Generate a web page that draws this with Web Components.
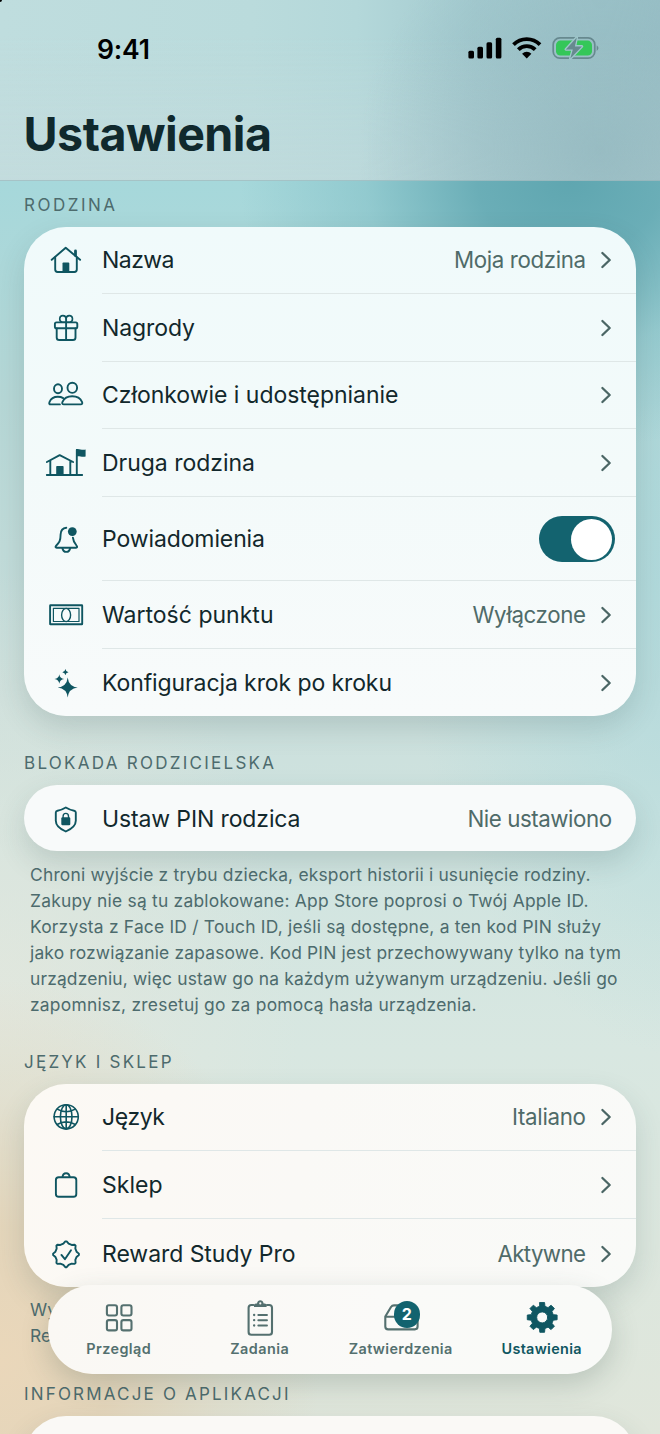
<!DOCTYPE html>
<html lang="pl">
<head>
<meta charset="utf-8">
<title>Ustawienia</title>
<style>
html,body{margin:0;padding:0;height:1434px;overflow:hidden}
body{font-family:Inter,"Liberation Sans",sans-serif;color:#12282c}
</style>
</head>
<body>
<settings-app></settings-app>
<script>
const define = (name, html, setup) => customElements.define(name, class extends HTMLElement {
  constructor(){
    super();
    const t = document.createElement('template');
    t.innerHTML = html;
    this.attachShadow({mode:'open'}).append(t.content.cloneNode(true));
  }
  connectedCallback(){ if (setup) setup(this, this.shadowRoot); }
});

// Closed polygon with points at [radius, degrees] around a centre.
const polar = (cx, cy, pts) => 'M' + pts.map(([r,a]) => {
  const t = a*Math.PI/180;
  return (cx + r*Math.sin(t)).toFixed(2) + ' ' + (cy - r*Math.cos(t)).toFixed(2);
}).join('L') + 'Z';
const repeat = (n, f) => Array.from({length:n}, (_,i) => f(i*360/n)).flat();
const sparkle = (x,y,r) => { const k = r*.1;
  return `M${x} ${y-r}Q${x+k} ${y-k} ${x+r} ${y}Q${x+k} ${y+k} ${x} ${y+r}Q${x-k} ${y+k} ${x-r} ${y}Q${x-k} ${y-k} ${x} ${y-r}Z`; };

const seal = polar(21,17.3, repeat(8, a => [[12.9,a-3],[12.9,a+3],[10.9,a+14],[10.9,a+31]]));
const gear = polar(16,16, repeat(8, a => [[15.1,a-9],[15.1,a+9],[11.4,a+14],[11.4,a+31]]));

const icons = {
  house:'<path d="M6.7 16.8 20.7 4.8 35.1 16.8"/><path d="M10.2 14.3V26.6Q10.2 29 12.6 29H29.4Q31.8 29 31.8 26.6V14.3"/><path d="M30.5 8v4.5" stroke-width="2.8"/><path class="f" d="M17.5 28.8V20.4q0-.9.9-.9h5q.9 0 .9.9v8.4z"/>',
  gift:'<rect x="9.9" y="11.4" width="22.4" height="5.9" rx="1.6"/><path d="M11.7 17.4V26.4Q11.7 29 14.3 29H27.9Q30.5 29 30.5 26.4V17.4M21.1 8V29"/><path d="M21.1 11.2H17.4A3.2 3.3 0 1 1 21.1 7.8A3.2 3.3 0 1 1 24.8 11.2Z" stroke-width="1.6"/>',
  people:'<ellipse cx="27.3" cy="9.8" rx="4.8" ry="5.1"/><ellipse cx="13" cy="10.7" rx="4" ry="4.5"/><path d="M18.9 26.4C17.3 26.4 16.8 25.3 17.5 23.8C19 20.4 22.6 18.3 27.2 18.3S35.5 20.4 37 23.8C37.7 25.3 37.2 26.4 35.6 26.4Z"/><path d="M14.9 26.4H5.8C4.2 26.4 3.9 25.5 4.5 24C5.8 20.8 8.8 18.8 12.8 18.8C14.9 18.8 16.7 19.2 18.2 20.1"/>',
  annex:'<path d="M1.9 16 14.7 9.2 28.1 16M5.3 14.8V28.8M25.3 14.8V28.8M1.8 29H37.2M31.8 4V28.8"/><path class="f" d="M11.2 29V20.8q0-.8.8-.8h5.8q.8 0 .8.8V29zM31 3.3c2.8-1.2 5.4 1.2 9.6.3v7c-4 .9-6.6-1.2-9.6-.1z"/>',
  bell:'<path d="M21.3 5.8C17.7 6.2 15.7 8.9 15.6 12.5C15.5 19.2 14.4 20.5 10.9 24C10.2 24.9 10.5 25.7 11.6 25.7H31.1C32.2 25.7 32.4 24.9 31.8 24C29.3 21.1 28.2 19.7 27.9 15.6"/><path d="M17.4 26C17.8 28.7 19.3 29.9 21.3 29.9S24.8 28.7 25.2 26"/><circle class="f" cx="27.3" cy="9.6" r="4.4"/>',
  note:'<rect x="5.1" y="7.3" width="32.1" height="19" rx=".4" stroke-width="1.9"/><rect x="8.4" y="10.3" width="25.6" height="13.2" stroke-width="1.2"/><ellipse cx="21.1" cy="17" rx="4.5" ry="6.6" stroke-width="1.4"/>',
  sparkles:`<path class="f" d="${sparkle(22.7,21.6,10)}${sparkle(14.3,13,4.8)}${sparkle(20.4,6.2,3.1)}"/>`,
  shield:'<path d="M20.8 5.5C17.7 7.4 15.2 8.3 12.5 8.7Q10.8 9 10.8 10.6V18.8C10.8 23.2 14.2 26.7 20.8 29.5C27.4 26.7 30.8 23.2 30.8 18.8V10.6Q30.8 9 29.1 8.7C26.4 8.3 23.9 7.4 20.8 5.5Z"/><rect class="f" x="16.3" y="15.3" width="9" height="8" rx="1.2"/><path d="M18.1 16V14.2A2.7 2.8 0 0 1 23.5 14.2V16" stroke-width="1.4"/>',
  globe:'<g stroke-width="1.6"><circle cx="21.2" cy="16.8" r="12.1"/><ellipse cx="21.2" cy="16.8" rx="5.8" ry="12.1"/><path d="M21.2 4.7V28.9M9.1 16.8H33.3M12.1 9.1Q21.2 14.3 30.3 9.1M12.1 24.5Q21.2 19.3 30.3 24.5"/></g>',
  bag:'<rect x="10.9" y="9.3" width="20.4" height="19.4" rx="2.8"/><path d="M17.5 9C17.7 6.5 19.1 5.2 21.1 5.2S24.5 6.5 24.7 9"/>',
  seal:`<path d="${seal}" stroke-width="1.9"/><path d="M16.4 17.9 19.9 22.2 26 13.2"/>`
};

define('row-icon', `<style>:host{display:block;width:42px;height:34px;flex:none}
svg{display:block;fill:none;stroke:#0f5661;stroke-width:1.9;stroke-linecap:round;stroke-linejoin:round}
.f{fill:#0f5661;stroke:none}</style><svg width="42" height="34" viewBox="0 0 42 34"></svg>`,
  (el, r) => { r.querySelector('svg').innerHTML = icons[el.getAttribute('name')] || ''; });

define('chevron-mark', `<style>:host{display:block;width:12px;height:20px;margin-left:14px;flex:none}svg{display:block}</style>
<svg width="12" height="20" viewBox="0 0 12 20"><path d="M2.4 3 9.7 10 2.4 17" fill="none" stroke="#4b6665" stroke-width="2.3" stroke-linecap="round" stroke-linejoin="round"/></svg>`);

define('toggle-switch', `<style>:host{display:flex;justify-content:flex-end;align-items:center;box-sizing:border-box;width:76.5px;height:46.5px;padding:3px;border-radius:24px;background:#13636f;margin-right:-3px}
i{display:block;width:41px;height:41px;border-radius:50%;background:#fff}</style><i></i>`);

define('settings-row', `<style>
:host{display:flex;align-items:center;height:67px;box-sizing:border-box;padding:0 24px 1px 21px;
 font-size:23px;line-height:30px;background:linear-gradient(#dfe7e7,#dfe7e7) 100% 100%/calc(100% - 78px) 1.5px no-repeat}
:host([tall]){height:68px;padding-bottom:0}:host([toggle]){height:84px;padding-bottom:0}:host([last]){background:none;padding-bottom:0;padding-top:1px}
.label{margin-left:15px;flex:1;color:#12282c}.value{color:#4f6b69;font-size:22.3px}
</style><div class="icon"></div><div class="label"><slot></slot></div><div class="value"><slot name="value"></slot></div>`,
  (el, r) => {
    const icon = document.createElement('row-icon');
    icon.setAttribute('name', el.getAttribute('icon'));
    r.querySelector('.icon').replaceChildren(icon);
    if (el.hasAttribute('link')) r.append(document.createElement('chevron-mark')); });

define('settings-card', `<style>:host{display:block;margin:0 24px;border-radius:42px;background:var(--fill,#f7faf9);box-shadow:0 12px 28px rgba(45,80,80,.17);overflow:hidden}
:host([pill]){border-radius:33px}</style><slot></slot>`);

define('section-title', `<style>:host{display:block;height:20px;padding:var(--top,14px) 24px 12px;font-size:17px;line-height:20px;color:#4d6b6d}</style><slot></slot>`);

define('foot-note', `<style>:host{display:flex;flex-direction:column;align-items:flex-start;padding:var(--top,11px) 30px 0;font-size:17.4px;line-height:26px;color:#4d6b6d}</style><slot></slot>`);

define('status-bar', `<style>:host{display:flex;justify-content:space-between;height:97px;box-sizing:border-box;padding:33px 60px 0 97px;font-size:26.5px;font-weight:600;line-height:32px;color:#000}
svg{display:block}</style><fit-text w="53">9:41</fit-text>
<svg width="132" height="32" viewBox="468 33 132 32">
<rect x="468.4" y="50.7" width="5.6" height="7.8" rx="1.5"/><rect x="477.4" y="46.7" width="5.6" height="11.8" rx="1.5"/><rect x="486.5" y="42.2" width="5.6" height="16.3" rx="1.5"/><rect x="495.8" y="37.7" width="5.6" height="20.8" rx="1.5"/>
<g fill="none" stroke="#000" stroke-width="3.8"><path d="M513.5 44.6A18.8 18.8 0 0 1 540 44.6"/><path d="M518.3 49.6A12 12 0 0 1 535.2 49.6"/></g><path d="M522.1 53.7A6.7 6.7 0 0 1 531.4 53.7L526.75 58.5Z"/>
<rect x="553.2" y="37.9" width="41.6" height="20.3" rx="6.7" fill="none" stroke="#67898f" stroke-width="1.7"/>
<rect x="556" y="40.6" width="36" height="15" rx="4.4" fill="#34c759"/>
<path d="M596.7 45.2Q600.2 48.1 596.7 51Z" fill="#67898f"/>
<path d="M576.8 37.5 565.8 49.4H572.8L570.3 58.6 582 46.4H574.9Z" fill="#67898f" stroke="#9fc7cb" stroke-width="2.6" stroke-linejoin="round" paint-order="stroke"/>
</svg>`);

define('app-header', `<style>:host{display:block;height:181px;box-sizing:border-box;border-bottom:1px solid rgba(150,178,184,.6);
 background:radial-gradient(ellipse 240px 240px at 600px 150px,rgba(147,184,191,.8) 0%,rgba(148,185,192,.5) 45%,rgba(150,188,194,0) 100%),linear-gradient(180deg,rgba(195,218,221,0) 20%,rgba(200,219,221,.45)),linear-gradient(90deg,#bfddde 0%,#badbdc 38%,#b4d8da 54%,#a3cacf 72%,#98c0c7 100%)}
h1{margin:0;padding:1px 0 0 23.5px;font-size:46.6px;line-height:72px;font-weight:700;color:#10292d}</style>
<status-bar></status-bar><h1><fit-text w="248.5">Ustawienia</fit-text></h1>`);

define('tab-item', `<style>:host{display:flex;flex-direction:column;align-items:center;width:141px;position:relative;font-size:14.4px;line-height:18px;font-weight:600;color:#54706f}
:host([active]){color:#0f5661}
.icon{height:55px;box-sizing:border-box;padding:13px 0 0 0}
.badge{position:absolute;left:64px;top:16px;width:25.5px;height:27px;border-radius:13px;background:#13636f;color:#fff;font-size:16px;font-weight:700;line-height:27px;text-align:center}
.badge:empty{display:none}</style><div class="icon"><slot name="icon"></slot></div><slot></slot><div class="badge"></div>`,
  (el, r) => { r.querySelector('.badge').textContent = el.getAttribute('badge') || ''; });

define('tab-bar', `<style>:host{position:absolute;left:48px;top:1285px;width:564px;height:89px;display:flex;border-radius:45px;background:linear-gradient(90deg,#faf8f4,#fafaf8 60%,#f9faf8);box-shadow:0 10px 28px rgba(60,80,75,.22)}
svg{display:block;fill:none;stroke:currentColor;stroke-width:2.1;stroke-linecap:round;stroke-linejoin:round}</style>
<tab-item><svg slot="icon" width="40" height="40" viewBox="0 0 40 40"><rect x="7.9" y="7.2" width="10.1" height="10.3" rx="2"/><rect x="22.4" y="7.2" width="10.1" height="10.3" rx="2"/><rect x="7.9" y="22.1" width="10.1" height="10.3" rx="2"/><rect x="22.4" y="22.1" width="10.1" height="10.3" rx="2"/></svg><fit-text w="64.5">Przegląd</fit-text></tab-item>
<tab-item><svg slot="icon" width="40" height="40" viewBox="0 0 40 40"><path d="M13.5 7H11.4Q8.6 7 8.6 9.8V33.9Q8.6 36.7 11.4 36.7H29.2Q32 36.7 32 33.9V9.8Q32 7 29.2 7H27"/><path d="M14 8.9V7.2Q14 5.4 16 5.4H17C17.5 1.3 23.1 1.3 23.6 5.4H24.6Q26.6 5.4 26.6 7.2V8.9Z" fill="currentColor" stroke="none"/><circle cx="20.3" cy="5.4" r="1.1" fill="#faf9f6" stroke="none"/><path d="M18.3 17H27M18.3 22.2H27M18.3 27.5H27" stroke-width="1.9"/><path d="M14.1 17h.1M14.1 22.2h.1M14.1 27.5h.1" stroke-width="2.3"/></svg><fit-text w="58.5">Zadania</fit-text></tab-item>
<tab-item badge="2"><svg slot="icon" width="40" height="40" viewBox="0 0 40 40"><path d="M4.3 18.5 10 9Q11.1 7.4 13 7.4H27.8Q29.7 7.4 30.8 9L36.6 18.5V28.6Q36.6 31.4 33.8 31.4H7.1Q4.3 31.4 4.3 28.6ZM4.9 18.7H14.2"/></svg><fit-text w="103.5">Zatwierdzenia</fit-text></tab-item>
<tab-item active><svg slot="icon" width="40" height="40" viewBox="-4.2 -3.4 40 40"><path d="${gear}M21.5 16A5.5 5.5 0 1 0 10.5 16A5.5 5.5 0 1 0 21.5 16Z" fill="currentColor" fill-rule="evenodd" stroke-width=".9"/></svg><fit-text w="80">Ustawienia</fit-text></tab-item>`);

define('settings-app', `<style>
:host{display:block;position:relative;width:660px;height:1434px;overflow:hidden;
background:
 radial-gradient(ellipse 330px 270px at 570px 180px,#5fa6b0 0%,rgba(98,168,178,.88) 28%,rgba(120,185,193,.45) 62%,rgba(150,205,210,0) 100%),
 radial-gradient(ellipse 320px 380px at 0 1360px,#ead7ba 0%,rgba(228,212,184,.92) 35%,rgba(226,218,196,.5) 70%,rgba(226,230,220,0) 100%),
 radial-gradient(ellipse 300px 500px at 700px 560px,rgba(165,215,220,.7),rgba(180,220,222,0)),
 radial-gradient(ellipse 300px 450px at 0 1020px,rgba(230,231,220,.7),rgba(230,232,222,0)),
 linear-gradient(180deg,#a5d7da 0,#a6d8db 181px,#b6d7d6 400px,#cbdfdc 700px,#d0e4e0 850px,#d8e7e1 1050px,#e0e6db 1434px)}
.corner{position:absolute;left:0;top:0;width:2px;height:2px;background:#000;border-bottom-right-radius:2px}
</style>
<app-header></app-header><div class="corner"></div>
<section-title><fit-text w="91">RODZINA</fit-text></section-title>
<settings-card style="--fill:linear-gradient(180deg,#f0fafb,#f3fafa 50%,#f8fbfb)">
<settings-row icon="house" link><fit-text w="72.5">Nazwa</fit-text><fit-text slot="value" w="132">Moja rodzina</fit-text></settings-row>
<settings-row icon="gift" tall link><fit-text w="93">Nagrody</fit-text></settings-row>
<settings-row icon="people" link><fit-text w="296.5">Członkowie i udostępnianie</fit-text></settings-row>
<settings-row icon="annex" tall link><fit-text w="153">Druga rodzina</fit-text></settings-row>
<settings-row icon="bell" toggle><fit-text w="163">Powiadomienia</fit-text><toggle-switch slot="value"></toggle-switch></settings-row>
<settings-row icon="note" tall link><fit-text w="171.5">Wartość punktu</fit-text><fit-text slot="value" w="113.5">Wyłączone</fit-text></settings-row>
<settings-row icon="sparkles" last link><fit-text w="290">Konfiguracja krok po kroku</fit-text></settings-row>
</settings-card>
<section-title style="--top:37px"><fit-text w="250">BLOKADA RODZICIELSKA</fit-text></section-title>
<settings-card pill style="--fill:#f8fafa"><settings-row icon="shield" last style="height:66px"><fit-text w="198.5">Ustaw PIN rodzica</fit-text><fit-text slot="value" w="144.5">Nie ustawiono</fit-text></settings-row></settings-card>
<foot-note><fit-text w="560.5">Chroni wyjście z trybu dziecka, eksport historii i usunięcie rodziny.</fit-text><fit-text w="558.5">Zakupy nie są tu zablokowane: App Store poprosi o Twój Apple ID.</fit-text><fit-text w="571">Korzysta z Face ID / Touch ID, jeśli są dostępne, a ten kod PIN służy</fit-text><fit-text w="591">jako rozwiązanie zapasowe. Kod PIN jest przechowywany tylko na tym</fit-text><fit-text w="587.5">urządzeniu, więc ustaw go na każdym używanym urządzeniu. Jeśli go</fit-text><fit-text w="446.5">zapomnisz, zresetuj go za pomocą hasła urządzenia.</fit-text></foot-note>
<section-title style="--top:34px"><fit-text w="147.5">JĘZYK I SKLEP</fit-text></section-title>
<settings-card style="--fill:linear-gradient(100deg,#fcf9f4,#faf9f6 45%,#f9faf8)">
<settings-row icon="globe" link><fit-text w="63">Język</fit-text><fit-text slot="value" w="74">Italiano</fit-text></settings-row>
<settings-row icon="bag" tall link><fit-text w="60.5">Sklep</fit-text></settings-row>
<settings-row icon="seal" tall last link><fit-text w="193.5">Reward Study Pro</fit-text><fit-text slot="value" w="88.5">Aktywne</fit-text></settings-row>
</settings-card>
<foot-note style="--top:10px"><fit-text>Wy</fit-text><fit-text>Re</fit-text></foot-note>
<section-title style="--top:35px"><fit-text w="264.5">INFORMACJE O APLIKACJI</fit-text></section-title>
<settings-card style="--fill:#faf9f6;height:120px"></settings-card>
<tab-bar></tab-bar>`);

// Spreads its letters so that the text is w pixels wide. Defined last, so the hosts around it already have their fonts.
define('fit-text', `<style>:host{display:inline-block;white-space:pre}</style><slot></slot>`, el => {
  const n = el.textContent.length - 1, target = +el.getAttribute('w');
  if (!target || n < 1) return;
  const s = (target - el.getBoundingClientRect().width) / n;
  el.style.letterSpacing = s.toFixed(4) + 'px';
  el.style.marginRight = (-s).toFixed(4) + 'px';
});
</script>
</body>
</html>
